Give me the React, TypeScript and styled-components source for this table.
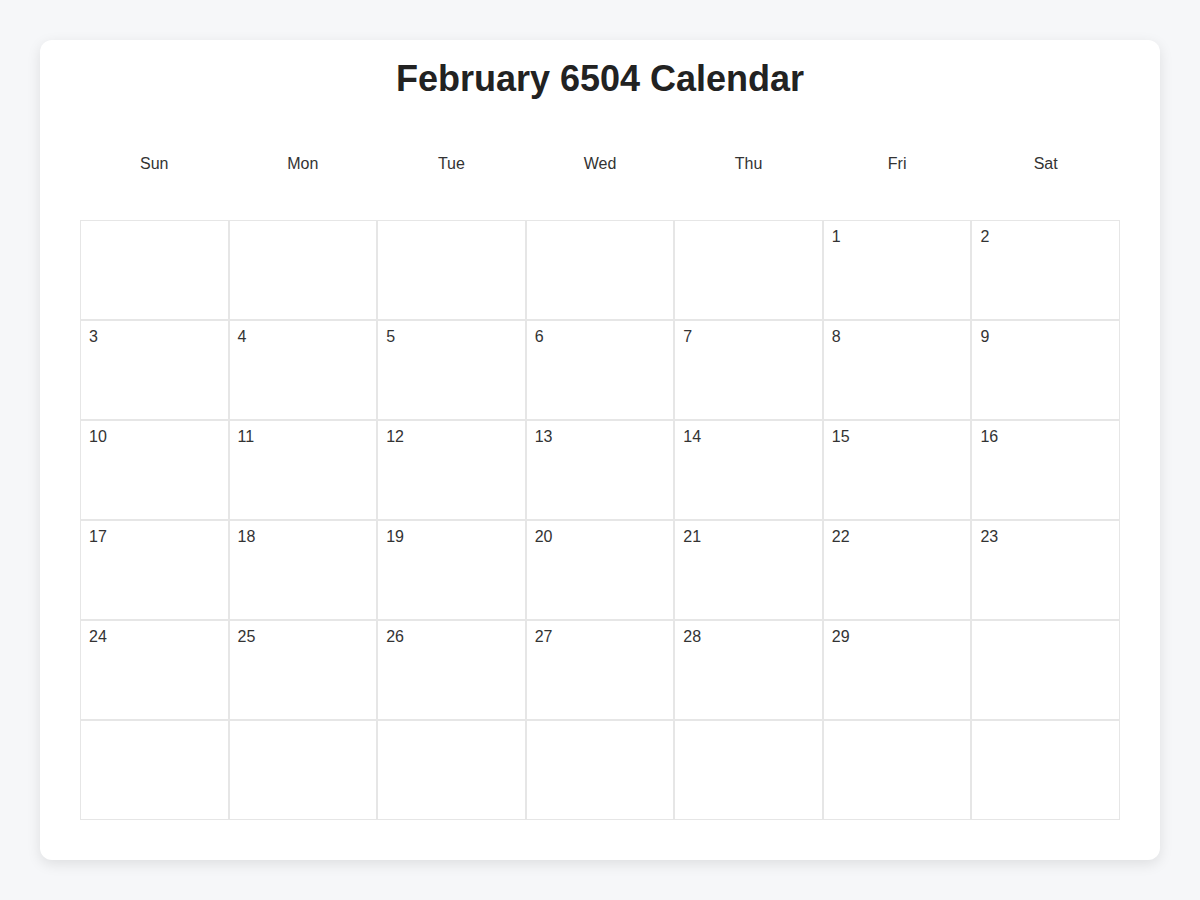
import React from "react";
import styled, { createGlobalStyle } from "styled-components";

const GlobalStyle = createGlobalStyle`
  html, body {
    margin: 0;
    padding: 0;
    background: #f6f7f9;
    font-family: "Liberation Sans", Arial, sans-serif;
    color: #333;
  }
`;

const Page = styled.div`
  padding: 40px;
`;

const Card = styled.div`
  background: #fff;
  border-radius: 12px;
  box-shadow: 0 4px 14px rgba(0, 0, 0, 0.1);
  padding: 18px 40px 40px;
`;

const Title = styled.h1`
  margin: 0 0 45px;
  text-align: center;
  font-size: 36px;
  line-height: 41px;
  font-weight: 700;
  color: #222;
`;

const WeekRow = styled.div`
  display: grid;
  grid-template-columns: repeat(7, 1fr);
  margin-bottom: 36px;
`;

const WeekDay = styled.div`
  height: 40px;
  line-height: 40px;
  text-align: center;
  font-size: 16px;
  color: #333;
`;

const Grid = styled.div`
  display: grid;
  grid-template-columns: repeat(7, 1fr);
  grid-auto-rows: 100px;
`;

const Cell = styled.div`
  border: 1px solid #e6e6e6;
  padding: 7px 8px;
  font-size: 16px;
  color: #333;
`;

const weekdays = ["Sun", "Mon", "Tue", "Wed", "Thu", "Fri", "Sat"];

// February 6504 starts on a Friday and has 29 days
const firstDay = 5;
const daysInMonth = 29;

const App = () => {
  const cells: (number | null)[] = [];
  for (let i = 0; i < 42; i++) {
    const day = i - firstDay + 1;
    cells.push(day >= 1 && day <= daysInMonth ? day : null);
  }

  return (
    <>
      <GlobalStyle />
      <Page>
        <Card>
          <Title>February 6504 Calendar</Title>
          <WeekRow>
            {weekdays.map((d) => (
              <WeekDay key={d}>{d}</WeekDay>
            ))}
          </WeekRow>
          <Grid>
            {cells.map((day, idx) => (
              <Cell key={idx}>{day ?? ""}</Cell>
            ))}
          </Grid>
        </Card>
      </Page>
    </>
  );
};

export default App;
